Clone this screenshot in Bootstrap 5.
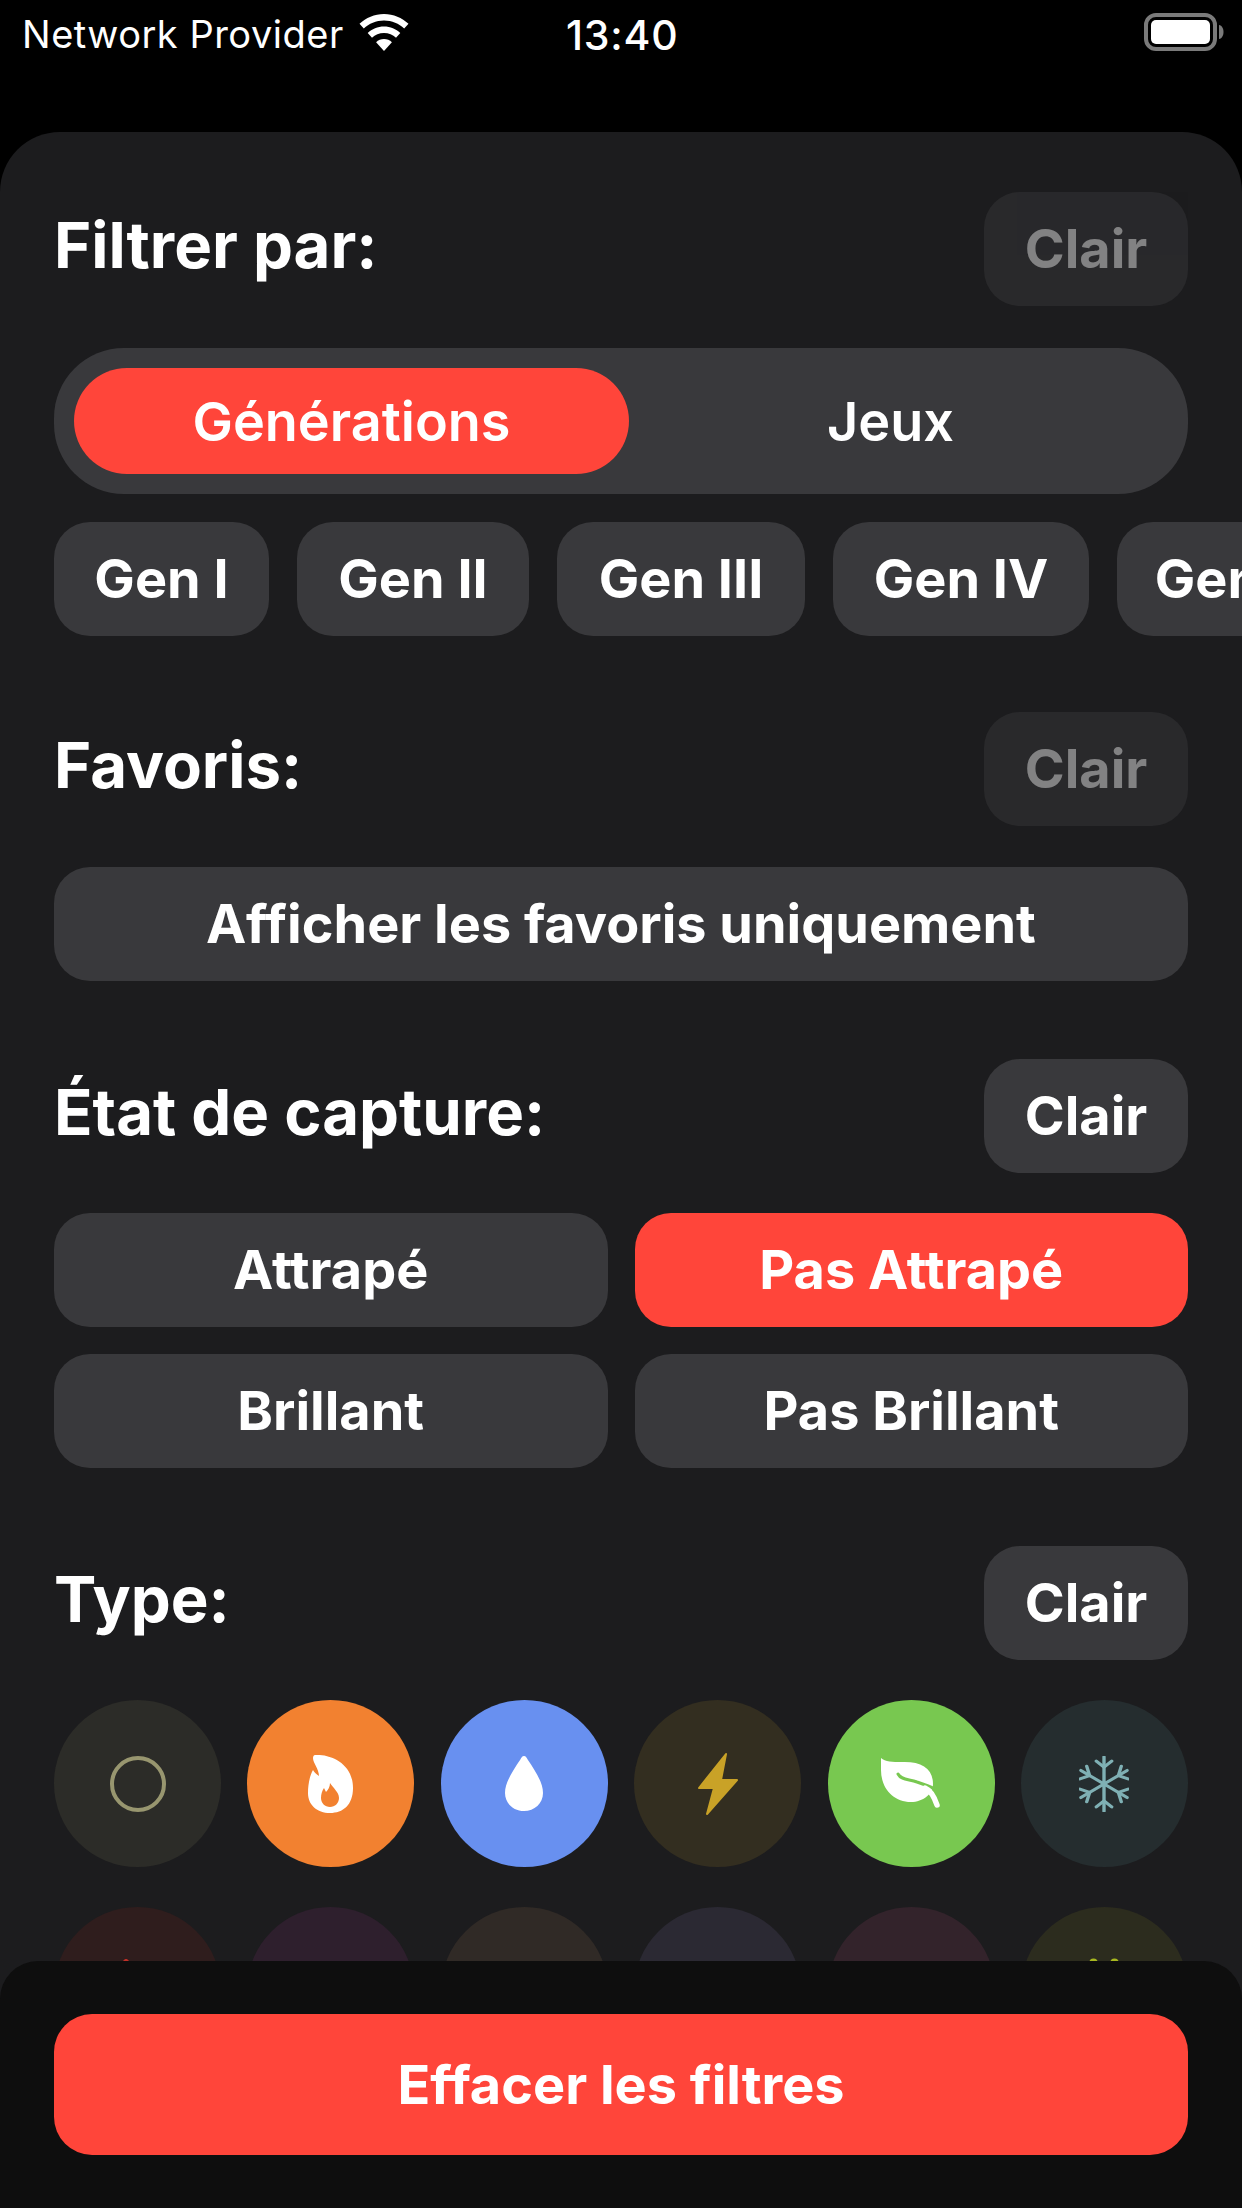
<!DOCTYPE html>
<html lang="fr">
<head>
<meta charset="utf-8">
<title>Filtres</title>
<link href="https://cdn.jsdelivr.net/npm/bootstrap@5.3.0/dist/css/bootstrap.min.css" rel="stylesheet">
<style>
html,body{background:#000;margin:0;height:2208px;overflow:hidden;font-family:"Inter","Liberation Sans",sans-serif;color:#fff}
.phone{width:1242px;height:2208px;position:relative;overflow:hidden}
.status{height:132px;padding:0 18px 0 22px;align-items:flex-start;line-height:1;font-weight:400}
.status-left{gap:14px;width:544px;padding-top:15px;font-size:38px;letter-spacing:.5px}
.wifi-ico{margin-top:-1px}
.status-time{font-weight:500;padding-top:15px;font-size:41px;letter-spacing:.8px}
.batt-box{padding-top:13px}
.sheet{background:#1c1c1e;border-radius:60px 60px 0 0;height:2076px;padding:60px 54px 0;overflow:hidden}
.head-row{height:114px}
.head-title{font-size:63.500px;font-weight:700;line-height:1;margin:0;padding-bottom:8px}
.act{background:#39393c;color:#fff;border:0;border-radius:36px;font-weight:700;font-size:54px;line-height:1;padding:0;display:flex;align-items:center;justify-content:center;height:114px}
.act-clear{width:204px}
.act-off{opacity:.45}
.act-red{background:#ff453a}
.seg{background:#39393c;border-radius:70px;height:146px;padding:20px;margin-top:42px}
.seg-item{border-radius:53px;font-size:54px;font-weight:600;display:flex;align-items:center;justify-content:center;height:106px}
.seg-on{background:#ff453a;flex:0 0 555px}
.seg-off{flex:1 1 0;padding-right:16px}
.gen-row{gap:28px;margin-top:28px;margin-right:-54px;overflow:hidden}
.gen-row .act{flex:none}
.gen-a{width:215px}.gen-b{width:232px}.gen-c{width:248px}.gen-d{width:256px}.gen-e{width:235px}
.sect-f{margin-top:76px}
.sect-e{margin-top:78px}
.sect-t{margin-top:78px}
.gap-top{margin-top:41px}
.opts{display:grid;grid-template-columns:1fr 1fr;gap:27px 27px;margin-top:40px}
.types{display:grid;grid-template-columns:repeat(6,167px);justify-content:space-between;row-gap:40px;margin-top:40px}
.dot{width:167px;height:167px;border-radius:50%;display:flex;align-items:center;justify-content:center}
.dot svg{display:block}
.foot{position:absolute;left:0;right:0;top:1961px;bottom:0;background:#0e0e0e;border-radius:38px 38px 0 0;padding:53px 54px 0}
.foot .act{width:100%;height:141px;border-radius:38px}
.foot .act-red{background:#ff453a}
</style>
</head>
<body>
<div class="phone">
  <div class="status d-flex">
    <div class="status-left d-flex">
      <span>Network Provider</span>
      <svg class="wifi-ico" width="52" height="38" viewBox="0 0 50 38" fill="#fff"><path d="M25 0C15.500 0 7 3.800 .5 9.800l4.300 4.700C10 9.500 17 6.500 25 6.500s15 3 20.200 8l4.300-4.700C43 3.800 34.500 0 25 0z"/><path d="M25 12.500c-6.300 0-12 2.500-16.300 6.500l4.300 4.700c3.100-2.900 7.300-4.700 12-4.700s8.900 1.800 12 4.700l4.300-4.700c-4.300-4-10-6.500-16.300-6.500z"/><path d="M25 25c-3 0-5.800 1.200-7.900 3.200L25 37l7.900-8.800C30.800 26.200 28 25 25 25z"/></svg>
    </div>
    <div class="status-time">13:40</div>
    <div class="ms-auto batt-box">
      <svg width="80" height="38" viewBox="0 0 80 38"><rect x="2" y="2" width="69" height="34" rx="10" fill="none" stroke="#7a7a7a" stroke-width="4"/><rect x="7" y="7" width="59" height="24" rx="5" fill="#fff"/><path d="M75 12c3 .6 4.500 3.500 4.500 7s-1.500 6.400-4.500 7z" fill="#7a7a7a"/></svg>
    </div>
  </div>

  <div class="sheet">
    <div class="head-row d-flex justify-content-between align-items-center">
      <h2 class="head-title">Filtrer par:</h2>
      <button class="act act-clear act-off">Clair</button>
    </div>
    <div class="seg d-flex">
      <div class="seg-item seg-on">Générations</div>
      <div class="seg-item seg-off">Jeux</div>
    </div>
    <div class="gen-row d-flex">
      <button class="act gen-a">Gen I</button>
      <button class="act gen-b">Gen II</button>
      <button class="act gen-c">Gen III</button>
      <button class="act gen-d">Gen IV</button>
      <button class="act gen-e">Gen V</button>
    </div>

    <div class="head-row d-flex justify-content-between align-items-center sect-f">
      <h2 class="head-title">Favoris:</h2>
      <button class="act act-clear act-off">Clair</button>
    </div>
    <button class="act w-100 gap-top">Afficher les favoris uniquement</button>

    <div class="head-row d-flex justify-content-between align-items-center sect-e">
      <h2 class="head-title">État de capture:</h2>
      <button class="act act-clear">Clair</button>
    </div>
    <div class="opts">
      <button class="act">Attrapé</button>
      <button class="act act-red">Pas Attrapé</button>
      <button class="act">Brillant</button>
      <button class="act">Pas Brillant</button>
    </div>

    <div class="head-row d-flex justify-content-between align-items-center sect-t">
      <h2 class="head-title">Type:</h2>
      <button class="act act-clear">Clair</button>
    </div>
    <div class="types">
      <div class="dot" style="background:#2c2c28"><svg width="56" height="56" viewBox="0 0 56 56"><circle cx="28" cy="28" r="26" fill="none" stroke="#98966f" stroke-width="4"/></svg></div>
      <div class="dot" style="background:#f28130"><svg width="45" height="58" viewBox="0 0 45 58"><path fill="#fff" fill-rule="evenodd" d="M7 0C22-1 45 8 45 33 45 50 35 58 22 58 9 58 0 50 0 38 0 29 2 20 5 15 6 17 8 19 11 21 11 14 5 8 5 3 5 1 6 0 7 0zM22 28C22 32 20 35 18 37L16 33C14 36 13 39 13 43 13 48 17 52 22 52 27 52 31 48 31 43 31 37 25 33 22 28z"/></svg></div>
      <div class="dot" style="background:#6890f0"><svg width="38" height="57" viewBox="0 0 40 58"><path fill="#fff" d="M20 0c2 0 3 2 4 4 8 12 16 24 16 35 0 11-9 19-20 19S0 50 0 39C0 28 8 16 16 4c1-2 2-4 4-4z"/></svg></div>
      <div class="dot" style="background:#332e20"><svg width="40" height="62" viewBox="0 0 40 62"><path fill="#c9a227" stroke="#c9a227" stroke-width="2" stroke-linejoin="round" d="M28 1 1 35h15L9 61 39 27H23z"/></svg></div>
      <div class="dot" style="background:#78c850"><svg width="60" height="52" viewBox="0 0 60 52"><path fill="#fff" d="M0 0C4 4 12 4 20 4 40 3 52 10 52 26 52 36 42 44 30 44 12 44 0 30 0 12z"/><path fill="none" stroke="#78c850" stroke-width="3" stroke-linecap="round" d="M17 16C20 22 28 21 36 24 42 26 48 28 54 31"/><path fill="none" stroke="#fff" stroke-width="5.500" stroke-linecap="round" d="M44 30C51 33 54 41 56 47"/></svg></div>
      <div class="dot" style="background:#252d2f"><svg width="50" height="56" viewBox="0 0 52 66" preserveAspectRatio="none"><g fill="none" stroke="#7fb0b4" stroke-width="3.500" stroke-linecap="round" stroke-linejoin="round"><path d="M26 1v64M2 17l48 32M50 17 2 49"/><path d="m18 6 8 7 8-7M18 60l8-7 8 7M1 27l10-4-3-11M51 27l-10-4 3-11M1 39l10 4-3 11M51 39l-10 4 3 11"/></g></svg></div>
      <div class="dot" style="background:#2f1d1d"><svg width="60" height="66" viewBox="0 0 60 66"><path fill="#c03028" d="M14 8c0-5 2-7 4-7s4 2 4 7v30h-8z"/></svg></div>
      <div class="dot" style="background:#2e1f2d"></div>
      <div class="dot" style="background:#302a26"></div>
      <div class="dot" style="background:#2b2933"></div>
      <div class="dot" style="background:#33232b"></div>
      <div class="dot" style="background:#2c2c1e"><svg width="60" height="66" viewBox="0 0 60 66"><ellipse cx="19.500" cy="4" rx="4" ry="3.500" fill="#a8b820"/><ellipse cx="40.500" cy="4" rx="4" ry="3.500" fill="#a8b820"/></svg></div>
    </div>
  </div>

  <div class="foot">
    <button class="act act-red">Effacer les filtres</button>
  </div>
</div>
<script src="https://cdn.jsdelivr.net/npm/bootstrap@5.3.0/dist/js/bootstrap.bundle.min.js"></script>
</body>
</html>
